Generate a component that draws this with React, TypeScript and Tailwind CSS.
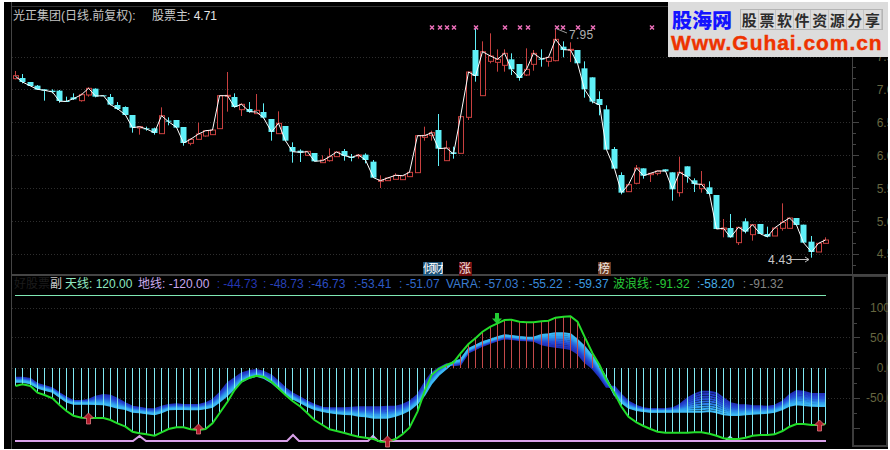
type C = [string, number, number, number, number, number];

const raw: C[] = [
  ["r",227,236,213,238,229],["c",234,246,222,250,246],["c",246,258,246,258,258],["c",257,269,255,270,268],
  ["c",268,272,268,302,271],["c",272,276,268,280,276],["c",272,303,270,308,304],["c",303,305,290,305,304],
  ["c",292,298,280,300,296],["r",284,302,280,305,284],["r",265,285,262,290,265],["c",266,290,265,292,288],
  ["c",286,288,286,288,287],["c",291,314,282,316,314],["c",315,327,306,330,326],["c",321,345,319,345,345],
  ["c",345,383,345,398,383],["r",380,384,380,404,380],["c",385,387,380,392,387],["c",385,399,383,404,398],
  ["r",347,401,322,401,347],["c",362,364,352,376,365],["c",360,383,360,383,382],["c",381,429,381,437,429],
  ["r",418,430,415,436,418],["r",402,418,368,418,402],["r",392,408,390,410,392],["r",390,404,390,404,390],
  ["r",287,386,287,386,287],["r",286,288,216,335,287],["c",291,321,280,323,321],["r",313,329,310,348,313],
  ["c",327,336,306,338,335],["r",331,341,282,342,336],["c",336,353,310,355,353],["c",357,396,357,422,396],
  ["r",370,401,334,401,370],["c",378,422,378,424,422],["c",441,455,427,488,455],["c",452,458,448,486,457],
  ["r",454,466,454,468,455],["c",459,484,459,484,484],["r",480,488,466,488,482],["r",470,482,445,485,470],
  ["r",456,470,456,470,456],["c",453,468,447,482,467],["c",471,473,462,484,472],["r",465,468,462,476,465],
  ["c",464,480,460,490,480],["c",485,533,480,533,533],["r",540,544,526,564,542],["r",534,542,534,542,534],
  ["r",526,538,520,538,526],["r",527,539,527,539,527],["r",517,530,517,530,517],["r",407,518,407,518,407],
  ["r",406,412,380,422,407],["r",398,406,392,422,398],["c",390,446,342,498,446],["r",444,482,422,482,444],
  ["c",457,462,440,476,462],["r",350,460,350,460,350],["r",216,352,216,360,216],["c",150,228,85,245,228],
  ["r",155,287,124,287,155],["r",168,184,100,190,168],["r",178,187,148,215,178],["r",160,196,148,215,160],
  ["c",178,208,160,225,208],["c",192,234,192,242,234],["r",208,225,145,228,208],["r",160,193,150,212,160],
  ["c",176,178,148,200,177],["r",172,184,172,200,172],["r",118,182,90,184,118],["c",140,150,124,172,149],
  ["r",148,150,127,186,150],["c",150,190,150,190,190],["c",205,268,184,293,268],["c",232,305,232,310,305],
  ["c",297,315,274,346,315],["c",328,449,316,449,449],["c",447,506,441,506,506],["c",525,578,517,583,578],
  ["r",554,575,554,575,554],["r",504,550,495,553,504],["c",505,527,505,536,527],["r",520,524,520,546,520],
  ["r",513,520,511,526,513],["c",508,514,508,514,513],["c",517,568,517,602,568],["r",517,578,470,590,517],
  ["c",499,530,499,548,530],["c",541,552,535,576,552],["r",553,566,513,578,553],["c",562,582,544,582,582],
  ["c",585,687,585,687,687],["r",684,688,657,712,685],["c",684,712,642,712,712],["r",682,728,682,735,682],
  ["c",664,695,655,700,695],["r",674,704,674,722,674],["c",672,702,672,702,702],["c",702,710,680,712,710],
  ["r",684,708,684,708,684],["r",667,685,610,692,667],["r",654,685,654,685,654],["c",654,675,654,675,675],
  ["c",674,728,674,728,728],["c",725,756,708,773,756],["r",730,756,730,756,730],["r",720,730,712,730,720],
];

const green = [483,478,483,503,510,520,540,558,572,578,579,579,579,585,595,605,620,625,628,632,622,612,607,607,613,615,612,595,565,530,495,470,458,452,455,470,490,510,528,545,565,585,600,613,618,624,630,635,638,642,650,650,642,628,608,560,500,450,432,420,412,385,357,340,320,305,295,285,284,290,292,292,289,287,278,275,274,290,335,385,420,465,505,545,575,592,603,612,620,623,623,623,623,622,622,626,632,640,642,642,638,632,630,630,628,618,605,597,597,600,600,597];

const ribbon: [number, number][] = [
  [458,470],[458,470],[462,475],[477,488],[483,494],[490,500],[505,515],[518,530],[528,536],[528,536],[525,536],[515,537],[510,538],[512,542],[522,548],[535,552],[545,560],[548,562],[552,565],[553,568],
  [545,562],[540,553],[538,552],[540,552],[540,553],[540,553],[535,550],[525,545],[505,530],[475,510],[460,490],[445,470],[438,458],[435,452],[440,458],[452,472],[470,490],[490,507],[505,520],[518,532],
  [530,543],[540,552],[548,558],[550,562],[550,565],[550,567],[548,568],[547,572],[547,574],[547,578],[547,578],[545,578],[545,572],[540,565],[530,555],[510,535],[475,510],[445,475],[430,450],[418,430],
  [410,421],[405,418],[372,382],[362,372],[352,362],[344,353],[337,346],[331,340],[333,342],[336,345],[338,346],[338,347],[330,358],[328,362],[325,365],[325,368],[328,372],[345,385],[365,410],[395,430],
  [425,455],[460,485],[485,510],[510,532],[530,548],[543,555],[550,558],[553,560],[553,560],[552,560],[550,560],[540,560],[520,560],[508,560],[500,560],[500,558],[505,562],[520,568],[535,570],[540,570],
  [541,568],[543,566],[544,565],[545,563],[542,560],[530,552],[510,542],[498,538],[500,540],[507,542],[507,543],[507,543],
];

const cx = (i: number) => Math.round(15 + 7.3 * i) + 0.5;
const RED = "#c8403f";
const CYAN = "#5ff0f8";

const closePts = raw.map((c, i) => `${cx(i)},${(c[5] / 3).toFixed(1)}`).join(" ");
const greenPts = green.map((g, i) => `${cx(i)},${(225 + g / 3).toFixed(1)}`).join(" ");
const shades = ["#2030b8", "#2238c4", "#2444cc", "#2652d6", "#2866dc", "#2a7ee4", "#2e96ea", "#34aaf0", "#3cb8f4"];
const ribbonLine = (j: number) =>
  ribbon
    .map(([a, b], i) => {
      const flip = i >= 60 && i <= 81;
      const t = j / (shades.length - 1);
      const y = flip ? b + (a - b) * t : a + (b - a) * t;
      return `${cx(i)},${(225 + y / 3).toFixed(1)}`;
    })
    .join(" ");

const markers = [432, 440, 447, 454, 476, 505, 520, 528, 557, 563, 578, 593, 652];
const mainGrid = [57, 89, 122, 155, 188, 221, 254];
const subGrid = [308, 337, 368, 398];
const mainLabels = ["7.50", "7.00", "6.50", "6.00", "5.50", "5.00", "4.50"];
const subLabels = ["100.0", "50.00", "0.00", "-50.00"];
const slogan = ["股", "票", "软", "件", "资", "源", "分", "享"];

function UpArrow({ x, y, h, fill }: { x: number; y: number; h: number; fill: string }) {
  const w = 5;
  return (
    <polygon
      points={`${x},${y} ${x + w},${y + 5} ${x + 2},${y + 5} ${x + 2},${y + h} ${x - 2},${y + h} ${x - 2},${y + 5} ${x - w},${y + 5}`}
      fill={fill}
      stroke="#e07a80"
      strokeWidth="0.8"
    />
  );
}

export default function App() {
  return (
    <div className="w-[890px] h-[450px] bg-white pt-[2px] pl-[4px] pr-[2px] pb-[1px] overflow-hidden font-['Liberation_Sans','Noto_Sans_CJK_SC',sans-serif] text-[12px] leading-[14px]">
      <div className="w-full h-full bg-black flex flex-col">
        {/* main panel */}
        <div className="h-[274px] shrink-0 flex overflow-hidden relative">
          <div className="w-[8px] shrink-0 border-r border-[#444444]" />
          <div className="flex-1 relative">
            <svg width="876" height="274" viewBox="12 2 876 274" className="block">
              <line x1="12" x2="852" y1="6.5" y2="6.5" stroke="#333333" />
              <line x1="852.5" x2="852.5" y1="2" y2="276" stroke="#444444" />
              <line x1="12" x2="888" y1="275" y2="275" stroke="#444444" strokeWidth="2" />
              {mainGrid.map((y) => (
                <line key={y} x1="12" x2="852" y1={y + 0.5} y2={y + 0.5} stroke="#2e2e2e" strokeDasharray="1 2" />
              ))}
              {Array.from({ length: 22 }).map((_, k) => {
                const y = 56.5 + k * 11;
                return <line key={k} x1="853" x2={k % 3 === 0 ? 859 : 856} y1={y} y2={y} stroke="#444444" />;
              })}
              {raw.map((c, i) => {
                const x = cx(i);
                const col = c[0] === "r" ? RED : CYAN;
                const top = c[1] / 3;
                const bot = c[2] / 3;
                return (
                  <g key={i}>
                    <line x1={x} x2={x} y1={c[3] / 3} y2={c[4] / 3} stroke={col} />
                    {c[0] === "r" ? (
                      <rect x={x - 2} y={top} width={5} height={Math.max(bot - top, 1)} fill="#000000" stroke={col} />
                    ) : (
                      <rect x={x - 3} y={top} width={6} height={Math.max(bot - top, 1)} fill={col} />
                    )}
                  </g>
                );
              })}
              <polyline points={closePts} fill="none" stroke="#ffffff" strokeWidth="1" />
              {markers.map((x) => (
                <g key={x} stroke="#ee70bb" strokeWidth="1.5">
                  <line x1={x - 2} x2={x + 2} y1="25.5" y2="29.5" />
                  <line x1={x - 2} x2={x + 2} y1="29.5" y2="25.5" />
                </g>
              ))}
              <line x1="557" y1="29" x2="567" y2="33" stroke="#999999" />
              <line x1="790" y1="259.5" x2="809" y2="259.5" stroke="#bbbbbb" />
              <polyline points="805,257 809,259.5 805,262" fill="none" stroke="#bbbbbb" />
            </svg>

            <div className="absolute left-[1px] top-[7px] flex items-center whitespace-nowrap text-[#c4c4c4]">
              <span className="w-[139px] shrink-0">光正集团(日线.前复权):</span>
              <span className="w-[33px] shrink-0 text-[#cccccc]">股票主</span>
              <span className="ml-[2px] text-[#e6e6e6]">: 4.71</span>
            </div>

            <span className="absolute left-[557px] top-[26px] text-[#b0b0b0] tracking-[0.3px]">7.95</span>
            <span className="absolute left-[756px] top-[251px] text-[#c8c8c8] tracking-[0.3px]">4.43</span>

            <span className="absolute left-[411px] top-[260px] w-[20px] h-[14px] bg-[#1f5478] text-white overflow-hidden whitespace-nowrap tracking-[-2.5px]">倾财</span>
            <span className="absolute left-[447px] top-[260px] w-[13px] h-[14px] bg-[#701010] text-[#f0e0e0] overflow-hidden whitespace-nowrap">涨</span>
            <span className="absolute left-[586px] top-[260px] w-[13px] h-[14px] bg-[#6a3a22] text-[#f0e8e0] overflow-hidden whitespace-nowrap">榜</span>

            <div className="absolute right-[-12px] top-[39px] flex flex-col text-[#666640] text-right">
              {mainLabels.map((l) => (
                <span key={l} className="h-[32.83px] flex items-center justify-end">{l}</span>
              ))}
            </div>

            {/* logo */}
            <div className="absolute left-[656px] top-0 w-[220px] h-[55px] bg-[#dcdcdc] flex flex-col">
              <div className="flex items-center h-[30px] pt-[5px] shrink-0">
                <span className="ml-[4px] w-[68px] shrink-0 font-['Noto_Sans_CJK_SC',sans-serif] font-black text-[20px] leading-[22px] text-[#1414ff] whitespace-nowrap">股海网</span>
                <div className="flex border border-[#b4b4b4]">
                  {slogan.map((s) => (
                    <span key={s} className="w-[17.6px] h-[19px] flex items-center justify-center border-r border-[#c4c4c4] font-['Noto_Sans_CJK_SC',sans-serif] font-bold text-[15px] leading-[19px] text-[#2c2c2c]">{s}</span>
                  ))}
                </div>
              </div>
              <span className="ml-[3px] font-bold text-[21px] leading-[22px] tracking-[0.95px] text-[#ee3300] whitespace-nowrap [-webkit-text-stroke:0.4px_#ee3300]">Www.Guhai.com.cn</span>
            </div>
          </div>
        </div>

        {/* sub panel */}
        <div className="flex-1 flex overflow-hidden">
          <div className="w-[8px] shrink-0 border-r border-[#444444]" />
          <div className="flex-1 relative">
            <svg width="876" height="172" viewBox="12 276 876 172" className="block">
              {subGrid.map((y) => (
                <line key={y} x1="12" x2="852" y1={y + 0.5} y2={y + 0.5} stroke="#2e2e2e" strokeDasharray="1 2" />
              ))}
              <rect x="853" y="276" width="34" height="170" fill="none" stroke="#3c3c3c" strokeWidth="2" />
              {[308, 323, 337, 352, 368, 383, 398, 413, 428].map((y, k) => (
                <line key={y} x1="854" x2={k % 2 === 0 ? 860 : 857} y1={y + 0.5} y2={y + 0.5} stroke="#444444" />
              ))}
              <line x1="15" x2="826" y1="295.5" y2="295.5" stroke="#7fe8b4" />
              <polyline
                points="15,441 133,441 139.5,436 146,441 287,441 293,435 299,441 368,441 373,436 378,441 826,441"
                fill="none"
                stroke="#d8a0e8"
                strokeWidth="2"
              />
              <polygon points="725,440 730,435.5 735,440" fill="#a8d8ee" />
              {shades.map((s, j) => (
                <polyline key={s} points={ribbonLine(j)} fill="none" stroke={s} strokeWidth="2" />
              ))}
              {green.map((g, i) => {
                const y = 225 + g / 3;
                const x = cx(i);
                return <line key={i} x1={x} x2={x} y1="368" y2={y} stroke={y < 368 ? "#c44a4a" : "#7fe8f2"} />;
              })}
              <polyline points={greenPts} fill="none" stroke="#22dd2a" strokeWidth="2" />
              <UpArrow x={88.5} y={413} h={11} fill="#b01c2c" />
              <UpArrow x={198.5} y={424} h={10} fill="#b01c2c" />
              <UpArrow x={387.5} y={436} h={11} fill="#b01c2c" />
              <UpArrow x={819.5} y={420} h={11} fill="#b01c2c" />
              <polygon points="497,324 492,318.5 495,318.5 495,313 499,313 499,318.5 502,318.5" fill="#22cc33" />
            </svg>

            <div className="absolute left-[2px] top-[1px] flex items-center whitespace-nowrap">
              <span className="w-[36px] shrink-0 text-[#1c1c1c]">好股票</span>
              <span className="w-[15px] shrink-0 text-[#c8c8c8]">副</span>
              <span className="w-[73px] shrink-0 text-[#8fe8c0]">天线: 120.00</span>
              <span className="w-[78.7px] shrink-0 text-[#c8a8ee]">地线: -120.00</span>
              <span className="w-[46.3px] shrink-0 text-[#2436b0]">: -44.73</span>
              <span className="w-[45px] shrink-0 text-[#2840b8]">: -48.73</span>
              <span className="w-[46px] shrink-0 text-[#2a4cc0]">:-46.73</span>
              <span className="w-[45px] shrink-0 text-[#2d5ac4]">:-53.41</span>
              <span className="w-[47px] shrink-0 text-[#3068c8]">: -51.07</span>
              <span className="w-[76px] shrink-0 text-[#3a7cd0]">VARA: -57.03</span>
              <span className="w-[46px] shrink-0 text-[#3a8cdc]">: -55.22</span>
              <span className="w-[45px] shrink-0 text-[#3c9ce0]">: -59.37</span>
              <span className="w-[84px] shrink-0 text-[#28c838]">波浪线: -91.32</span>
              <span className="w-[45.7px] shrink-0 text-[#48aee6]">:-58.20</span>
              <span className="shrink-0 text-[#858585]">: -91.32</span>
            </div>

            <div className="absolute right-[-12px] top-[17px] flex flex-col text-[#666640] text-right">
              {subLabels.map((l) => (
                <span key={l} className="h-[30px] flex items-center justify-end">{l}</span>
              ))}
            </div>
          </div>
        </div>
      </div>
    </div>
  );
}
